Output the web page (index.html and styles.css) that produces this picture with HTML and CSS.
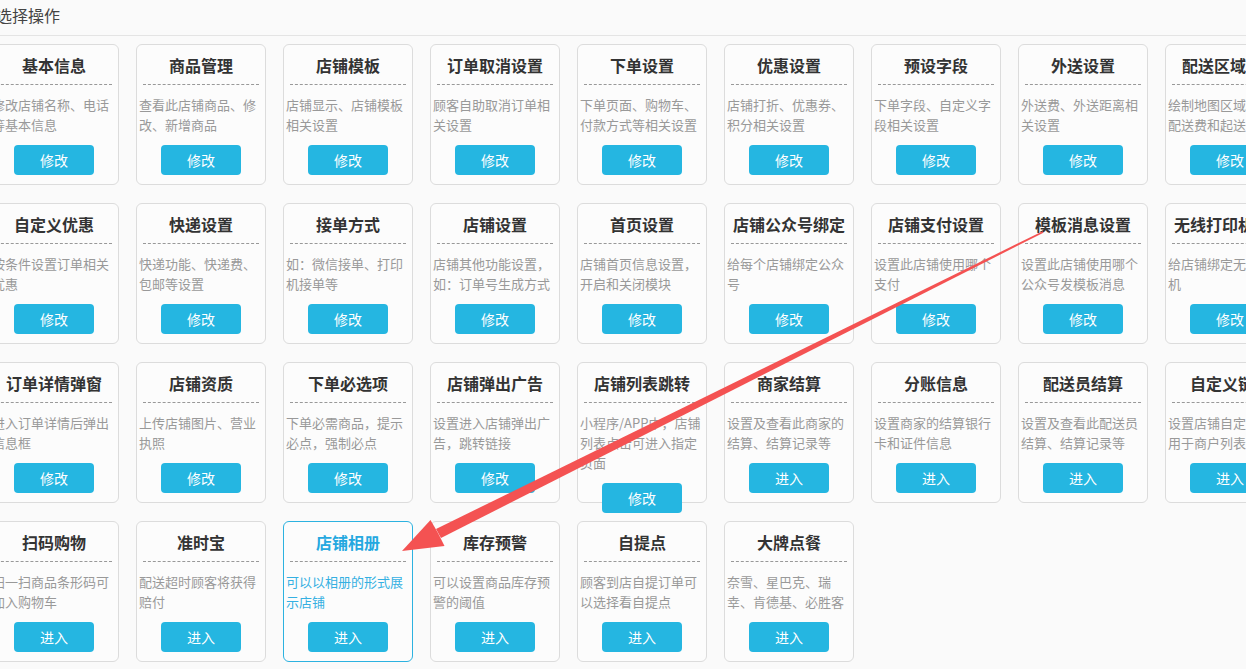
FILE: index.html
```html
<!DOCTYPE html>
<html lang="zh-CN">
<head>
<meta charset="utf-8">
<title>选择操作</title>
<link rel="stylesheet" href="styles.css">
</head>
<body>
<div class="page">
  <div class="header">选择操作</div>
  <div class="grid">
    <div class="card"><div class="title">基本信息</div><div class="desc">修改店铺名称、电话等基本信息</div><div class="btn">修改</div></div>
    <div class="card"><div class="title">商品管理</div><div class="desc">查看此店铺商品、修改、新增商品</div><div class="btn">修改</div></div>
    <div class="card"><div class="title">店铺模板</div><div class="desc">店铺显示、店铺模板相关设置</div><div class="btn">修改</div></div>
    <div class="card"><div class="title">订单取消设置</div><div class="desc">顾客自助取消订单相关设置</div><div class="btn">修改</div></div>
    <div class="card"><div class="title">下单设置</div><div class="desc">下单页面、购物车、付款方式等相关设置</div><div class="btn">修改</div></div>
    <div class="card"><div class="title">优惠设置</div><div class="desc">店铺打折、优惠券、积分相关设置</div><div class="btn">修改</div></div>
    <div class="card"><div class="title">预设字段</div><div class="desc">下单字段、自定义字段相关设置</div><div class="btn">修改</div></div>
    <div class="card"><div class="title">外送设置</div><div class="desc">外送费、外送距离相关设置</div><div class="btn">修改</div></div>
    <div class="card"><div class="title">配送区域设置</div><div class="desc">绘制地图区域，设置配送费和起送价</div><div class="btn">修改</div></div>

    <div class="card"><div class="title">自定义优惠</div><div class="desc">按条件设置订单相关优惠</div><div class="btn">修改</div></div>
    <div class="card"><div class="title">快递设置</div><div class="desc">快递功能、快递费、包邮等设置</div><div class="btn">修改</div></div>
    <div class="card"><div class="title">接单方式</div><div class="desc">如：微信接单、打印机接单等</div><div class="btn">修改</div></div>
    <div class="card"><div class="title">店铺设置</div><div class="desc">店铺其他功能设置，如：订单号生成方式</div><div class="btn">修改</div></div>
    <div class="card"><div class="title">首页设置</div><div class="desc">店铺首页信息设置，开启和关闭模块</div><div class="btn">修改</div></div>
    <div class="card"><div class="title">店铺公众号绑定</div><div class="desc">给每个店铺绑定公众号</div><div class="btn">修改</div></div>
    <div class="card"><div class="title">店铺支付设置</div><div class="desc">设置此店铺使用哪个支付</div><div class="btn">修改</div></div>
    <div class="card"><div class="title">模板消息设置</div><div class="desc">设置此店铺使用哪个公众号发模板消息</div><div class="btn">修改</div></div>
    <div class="card"><div class="title">无线打印机设置</div><div class="desc">给店铺绑定无线打印机</div><div class="btn">修改</div></div>

    <div class="card"><div class="title">订单详情弹窗</div><div class="desc">进入订单详情后弹出信息框</div><div class="btn">修改</div></div>
    <div class="card"><div class="title">店铺资质</div><div class="desc">上传店铺图片、营业执照</div><div class="btn">修改</div></div>
    <div class="card"><div class="title">下单必选项</div><div class="desc">下单必需商品，提示必点，强制必点</div><div class="btn">修改</div></div>
    <div class="card"><div class="title">店铺弹出广告</div><div class="desc">设置进入店铺弹出广告，跳转链接</div><div class="btn">修改</div></div>
    <div class="card"><div class="title">店铺列表跳转</div><div class="desc">小程序/APP中，店铺列表点击可进入指定页面</div><div class="btn">修改</div></div>
    <div class="card"><div class="title">商家结算</div><div class="desc">设置及查看此商家的结算、结算记录等</div><div class="btn">进入</div></div>
    <div class="card"><div class="title">分账信息</div><div class="desc">设置商家的结算银行卡和证件信息</div><div class="btn">进入</div></div>
    <div class="card"><div class="title">配送员结算</div><div class="desc">设置及查看此配送员结算、结算记录等</div><div class="btn">进入</div></div>
    <div class="card"><div class="title">自定义链接</div><div class="desc">设置店铺自定义链接用于商户列表跳转</div><div class="btn">进入</div></div>

    <div class="card"><div class="title">扫码购物</div><div class="desc">扫一扫商品条形码可加入购物车</div><div class="btn">进入</div></div>
    <div class="card"><div class="title">准时宝</div><div class="desc">配送超时顾客将获得赔付</div><div class="btn">进入</div></div>
    <div class="card active"><div class="title">店铺相册</div><div class="desc">可以以相册的形式展示店铺</div><div class="btn">进入</div></div>
    <div class="card"><div class="title">库存预警</div><div class="desc">可以设置商品库存预警的阈值</div><div class="btn">进入</div></div>
    <div class="card"><div class="title">自提点</div><div class="desc">顾客到店自提订单可以选择看自提点</div><div class="btn">进入</div></div>
    <div class="card"><div class="title">大牌点餐</div><div class="desc">奈雪、星巴克、瑞<br>幸、肯德基、必胜客</div><div class="btn">进入</div></div>
  </div>
</div>
<svg class="arrow" width="1246" height="669" viewBox="0 0 1246 669" xmlns="http://www.w3.org/2000/svg">
  <polygon fill="#f45252" points="1043.4,232.7 1042.6,231.3 436,529 441,538"/>
  <polygon fill="#f45252" points="402,551 430.5,520 438,533 444.5,546"/>
</svg>
</body>
</html>
```

FILE: styles.css
```css
html, body {
  margin: 0;
  padding: 0;
}
body {
  background: #fafafa;
  font-family: "Noto Sans CJK SC", "Noto Sans", sans-serif;
  overflow: hidden;
  width: 1246px;
  height: 669px;
  position: relative;
}
.page {
  margin-left: -11px;
  width: 1340px;
}
.header {
  height: 35px;
  line-height: 31px;
  font-size: 16px;
  color: #444;
  padding-left: 7px;
  border-bottom: 1px solid #e4e4e4;
  margin-left: 11px;
  text-indent: -11px;
}
.grid {
  display: grid;
  grid-template-columns: repeat(9, 130px);
  grid-auto-rows: 141px;
  column-gap: 17px;
  row-gap: 18px;
  margin-top: 8px;
}
.card {
  box-sizing: border-box;
  border: 1px solid #dcdcdc;
  border-radius: 6px;
  background: #fcfcfc;
  padding-top: 9px;
  display: flex;
  flex-direction: column;
  align-items: stretch;
}
.title {
  flex: none;
  margin: 0 6px;
  font-size: 16px;
  font-weight: bold;
  line-height: 22px;
  color: #333;
  text-align: center;
  white-space: nowrap;
  padding-bottom: 8px;
  border-bottom: 1px dashed #999;
}
.desc {
  flex: none;
  margin-top: 10px;
  padding: 0 2px;
  font-size: 13px;
  line-height: 20px;
  color: #999;
  min-height: 40px;
}
.btn {
  align-self: center;
  margin-top: 10px;
  width: 80px;
  height: 30px;
  flex: none;
  line-height: 30px;
  text-align: center;
  background: #25b6e1;
  color: #fff;
  font-size: 14px;
  border-radius: 4px;
}
.card.active {
  border-color: #2cb2e0;
}
.card.active .title {
  color: #25a8e0;
}
.card.active .desc {
  color: #35b0e2;
}
.arrow {
  position: absolute;
  left: 0;
  top: 0;
  pointer-events: none;
}
```
